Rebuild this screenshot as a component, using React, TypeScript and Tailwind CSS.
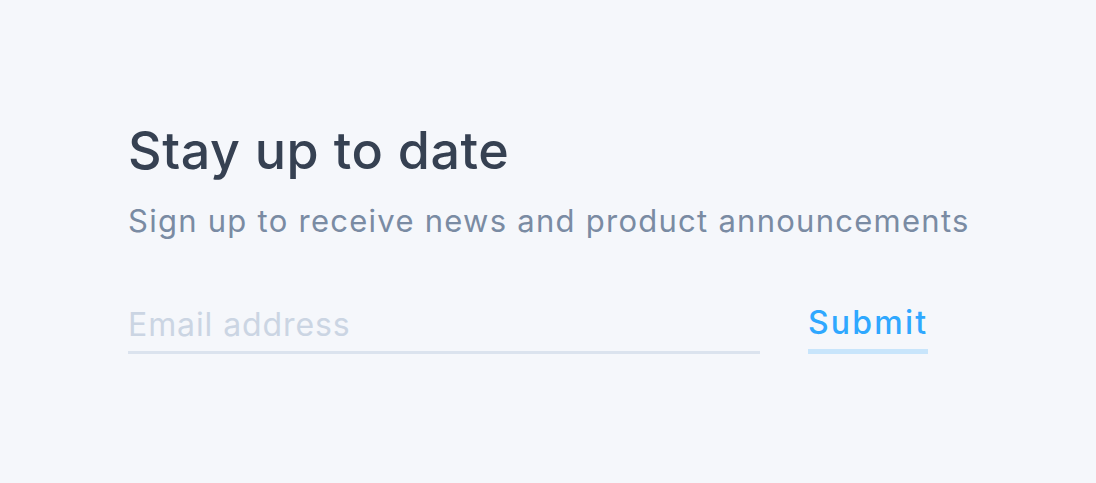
import React from "react";

export default function App() {
  return (
    <div className="w-[1096px] h-[483px] bg-[#f5f7fb]" style={{ fontFamily: "Inter, 'Noto Sans', sans-serif" }}>
      <div className="pl-[128px] pt-[121px] w-full">
        <h1 className="text-[52px] leading-[60px] font-medium text-[#364152] tracking-[0.55px]">Stay up to date</h1>
        <p className="mt-[20px] text-[31px] leading-[40px] text-[#7a8ba3] tracking-[1.26px]">Sign up to receive news and product announcements</p>
        <div className="mt-[62px] flex items-end gap-[48px]">
          <div className="w-[632px] border-b-[3px] border-[#dbe3ee] pb-[6px]">
            <input className="w-full bg-transparent outline-none text-[32px] leading-[40px] tracking-[0.9px] text-[#364152] placeholder:text-[#cbd5e3]" placeholder="Email address" />
          </div>
          <button className="text-[32px] leading-[40px] font-medium tracking-[2.2px] text-[#2fa8ff] border-b-[5px] border-[#c8e5fb] pb-[6px]">Submit</button>
        </div>
      </div>
    </div>
  );
}
